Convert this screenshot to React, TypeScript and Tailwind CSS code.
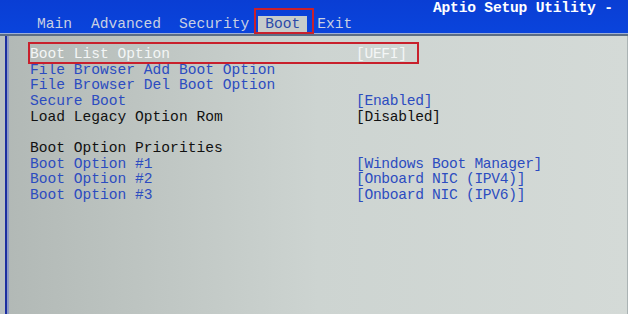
type Row = {
  label: string;
  value?: string;
  tone: "blue" | "black" | "sel" | "blank";
  valueTone?: "blue" | "black" | "sel";
};

const rows: Row[] = [
  { label: "Boot List Option", value: "[UEFI]", tone: "sel", valueTone: "sel" },
  { label: "File Browser Add Boot Option", tone: "blue" },
  { label: "File Browser Del Boot Option", tone: "blue" },
  { label: "Secure Boot", value: "[Enabled]", tone: "blue", valueTone: "blue" },
  { label: "Load Legacy Option Rom", value: "[Disabled]", tone: "black", valueTone: "black" },
  { label: "", tone: "blank" },
  { label: "Boot Option Priorities", tone: "black" },
  { label: "Boot Option #1", value: "[Windows Boot Manager]", tone: "blue", valueTone: "blue" },
  { label: "Boot Option #2", value: "[Onboard NIC (IPV4)]", tone: "blue", valueTone: "blue" },
  { label: "Boot Option #3", value: "[Onboard NIC (IPV6)]", tone: "blue", valueTone: "blue" },
];

const toneClass = {
  blue: "text-[#2c4cc0]",
  black: "text-[#111111]",
  sel: "text-[#f4f6f6]",
  blank: "",
};

const App = () => {
  return (
    <div className="relative w-[628px] h-[314px] overflow-hidden bg-[#c9d0cd] font-['Liberation_Mono',monospace] text-[14.6px]">
      {/* header */}
      <div className="h-[33px] bg-linear-to-b from-[#0a3ed4] to-[#0a44dc] flex flex-col">
        <div className="h-[15px] pl-[433px] whitespace-nowrap leading-[16px] font-bold text-white tracking-[-0.2px]">
          Aptio Setup Utility -
        </div>
        <div className="flex items-end h-[18px] pl-[37px] text-[#c9d0e2] leading-[17px] whitespace-nowrap">
          <span>Main</span>
          <span className="ml-[19px]">Advanced</span>
          <span className="ml-[18px]">Security</span>
          <span className="ml-[9px] px-[7px] bg-[#c6cccb] text-[#2b4aa8]">Boot</span>
          <span className="ml-[10px]">Exit</span>
        </div>
      </div>
      <div className="h-[1px] bg-[#9fb0d8]" />
      <div className="h-[2px] bg-[#5c6e84]" />

      {/* body */}
      <div className="flex h-[278px]">
        <div className="w-[5px] bg-[#b9c0c2]" />
        <div className="w-[2px] bg-[#1c2ea0]" />
        <div className="w-[2px] bg-[#8d9ac4]" />
        <div className="flex-1 bg-linear-to-r from-[#b2b9b6] via-[#cdd4d1] to-[#d4dad7] border-r border-[#aab3b4] pt-[11px] pl-[21px]">
          {rows.map((r, i) => (
            <div key={i} className="flex h-[15.67px] leading-[15.67px] whitespace-nowrap">
              <span className={`w-[326px] ${toneClass[r.tone]}`}>{r.label}</span>
              {r.value && (
                <span className={`tracking-[-0.3px] ${toneClass[r.valueTone ?? "black"]}`}>{r.value}</span>
              )}
            </div>
          ))}
        </div>
      </div>

      {/* red annotation boxes */}
      <div className="absolute left-[254px] top-[8px] w-[60px] h-[26px] border-2 border-[#c8202c]" />
      <div className="absolute left-[28px] top-[42px] w-[391px] h-[22px] border-2 border-[#c8202c]" />
    </div>
  );
};

export default App;
